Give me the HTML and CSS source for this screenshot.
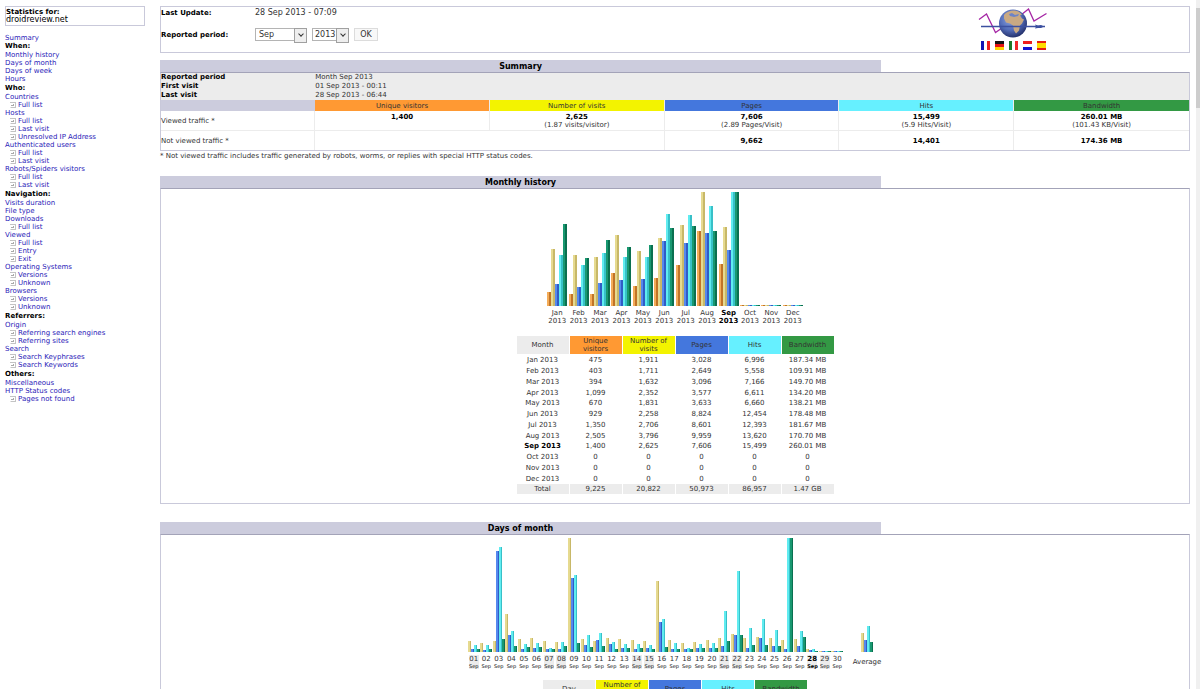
FILE: index.html
```
<!DOCTYPE html>
<html lang="en">
  <head>
    <meta charset="UTF-8" />
    <title>Statistics for droidreview.net (2013-09)</title>
    <link rel="stylesheet" href="styles.css">
  </head>
  <body>
    <svg class="defs" aria-hidden="true">
      <symbol id="page" viewBox="0 0 6 6">
        <path d="M0 .5h6M5.5 0v5.5M.5 5.5h5.500" stroke="#c4c4c4" fill="none" />
        <path d="M1 3.500h3M3.500 2v2" stroke="#aaa" fill="none" />
      </symbol>
    </svg>

    <aside class="sidebar">
      <div class="box site">
        <b>Statistics for:</b>
        <span>droidreview.net</span>
      </div>

      <nav>
        <ul>
          <li><a href="#summary">Summary</a></li>
        </ul>
        <h2>When:</h2>
        <ul>
          <li><a href="#month">Monthly history</a></li>
          <li><a href="#days">Days of month</a></li>
          <li><a href="#week">Days of week</a></li>
          <li><a href="#hours">Hours</a></li>
        </ul>
        <h2>Who:</h2>
        <ul>
          <li><a href="#countries">Countries</a></li>
          <li class="sub"><svg><use href="#page" /></svg><a href="#">Full list</a></li>
          <li><a href="#hosts">Hosts</a></li>
          <li class="sub"><svg><use href="#page" /></svg><a href="#">Full list</a></li>
          <li class="sub"><svg><use href="#page" /></svg><a href="#">Last visit</a></li>
          <li class="sub"><svg><use href="#page" /></svg><a href="#">Unresolved IP Address</a></li>
          <li><a href="#logins">Authenticated users</a></li>
          <li class="sub"><svg><use href="#page" /></svg><a href="#">Full list</a></li>
          <li class="sub"><svg><use href="#page" /></svg><a href="#">Last visit</a></li>
          <li><a href="#robots">Robots/Spiders visitors</a></li>
          <li class="sub"><svg><use href="#page" /></svg><a href="#">Full list</a></li>
          <li class="sub"><svg><use href="#page" /></svg><a href="#">Last visit</a></li>
        </ul>
        <h2>Navigation:</h2>
        <ul>
          <li><a href="#sessions">Visits duration</a></li>
          <li><a href="#filetypes">File type</a></li>
          <li><a href="#downloads">Downloads</a></li>
          <li class="sub"><svg><use href="#page" /></svg><a href="#">Full list</a></li>
          <li><a href="#urls">Viewed</a></li>
          <li class="sub"><svg><use href="#page" /></svg><a href="#">Full list</a></li>
          <li class="sub"><svg><use href="#page" /></svg><a href="#">Entry</a></li>
          <li class="sub"><svg><use href="#page" /></svg><a href="#">Exit</a></li>
          <li><a href="#os">Operating Systems</a></li>
          <li class="sub"><svg><use href="#page" /></svg><a href="#">Versions</a></li>
          <li class="sub"><svg><use href="#page" /></svg><a href="#">Unknown</a></li>
          <li><a href="#browsers">Browsers</a></li>
          <li class="sub"><svg><use href="#page" /></svg><a href="#">Versions</a></li>
          <li class="sub"><svg><use href="#page" /></svg><a href="#">Unknown</a></li>
        </ul>
        <h2>Referrers:</h2>
        <ul>
          <li><a href="#origin">Origin</a></li>
          <li class="sub"><svg><use href="#page" /></svg><a href="#">Referring search engines</a></li>
          <li class="sub"><svg><use href="#page" /></svg><a href="#">Referring sites</a></li>
          <li><a href="#keys">Search</a></li>
          <li class="sub"><svg><use href="#page" /></svg><a href="#">Search Keyphrases</a></li>
          <li class="sub"><svg><use href="#page" /></svg><a href="#">Search Keywords</a></li>
        </ul>
        <h2>Others:</h2>
        <ul>
          <li><a href="#misc">Miscellaneous</a></li>
          <li><a href="#errors">HTTP Status codes</a></li>
          <li class="sub"><svg><use href="#page" /></svg><a href="#">Pages not found</a></li>
        </ul>
      </nav>
    </aside>

    <main>
      <form class="box period">
        <div class="fields">
          <b>Last Update:</b>
          <span>28 Sep 2013 - 07:09</span>
          <label for="monthSelect">Reported period:</label>
          <div class="controls">
            <span class="select">
              <select id="monthSelect">
                <option>Jan</option>
                <option>Feb</option>
                <option>Mar</option>
                <option>Apr</option>
                <option>May</option>
                <option>Jun</option>
                <option>Jul</option>
                <option>Aug</option>
                <option selected>Sep</option>
                <option>Oct</option>
                <option>Nov</option>
                <option>Dec</option>
              </select>
            </span>
            <span class="select year">
              <select aria-label="Year">
                <option>2012</option>
                <option selected>2013</option>
              </select>
            </span>
            <button type="button">OK</button>
          </div>
        </div>

        <div class="brand">
          <svg class="logo" viewBox="0 0 70 30">
            <defs>
              <radialGradient id="sea" cx=".42" cy=".35" r=".65">
                <stop offset="0" stop-color="#8aa4e4" />
                <stop offset=".6" stop-color="#536cb8" />
                <stop offset="1" stop-color="#26336e" />
              </radialGradient>
            </defs>
            <path d="M1 11.500 8.500 6 17.500 24.500 24 20M43 7l7.500-6L56 13l12.500-7.500" fill="none" stroke="#a526a5" stroke-width="1.300" />
            <circle cx="35" cy="15.500" r="14" fill="url(#sea)" />
            <path d="M26 7c2-3 6-4.500 10-4.500 3 0 6 1.500 8 4l-2 1 2 3 2 1-2 4-2 2-1 5-3 3-2-3-1-5-3-2-4-1-2-4z" fill="#c9a983" />
            <path d="M31 6l3-1 3 2 4-1-1 2-4 1-4-1z" fill="#6c83c8" />
            <path d="M3 18.500h64" stroke="#3c50a0" stroke-width="1.300" />
            <path d="M57 16.500l3 1 3-.5 3 1.500-3 1.500h-3l-3 .5 1-2z" fill="#3c50a0" />
          </svg>
          <div class="flags">
            <a class="flag fr" href="#" title="French"></a>
            <a class="flag de" href="#" title="German"></a>
            <a class="flag it" href="#" title="Italian"></a>
            <a class="flag nl" href="#" title="Dutch"></a>
            <a class="flag es" href="#" title="Spanish"></a>
          </div>
        </div>
      </form>

      <section id="summary">
        <h1>Summary</h1>
        <div class="panel">
          <dl class="info">
            <dt>Reported period</dt>
            <dd>Month Sep 2013</dd>
            <dt>First visit</dt>
            <dd>01 Sep 2013 - 00:11</dd>
            <dt>Last visit</dt>
            <dd>28 Sep 2013 - 06:44</dd>
          </dl>
          <table class="traffic">
            <thead>
              <tr>
                <td></td>
                <th class="u">Unique visitors</th>
                <th class="v">Number of visits</th>
                <th class="p">Pages</th>
                <th class="h">Hits</th>
                <th class="k">Bandwidth</th>
              </tr>
            </thead>
            <tbody>
              <tr>
                <th>Viewed traffic *</th>
                <td><b>1,400</b><br>&nbsp;</td>
                <td><b>2,625</b><br>(1.87 visits/visitor)</td>
                <td><b>7,606</b><br>(2.89 Pages/Visit)</td>
                <td><b>15,499</b><br>(5.9 Hits/Visit)</td>
                <td><b>260.01 MB</b><br>(101.43 KB/Visit)</td>
              </tr>
              <tr>
                <th>Not viewed traffic *</th>
                <td colspan="2"></td>
                <td><b>9,662</b></td>
                <td><b>14,401</b></td>
                <td><b>174.36 MB</b></td>
              </tr>
            </tbody>
          </table>
        </div>
        <p class="note">* Not viewed traffic includes traffic generated by robots, worms, or replies with special HTTP status codes.</p>
      </section>

      <section id="month">
        <h1>Monthly history</h1>
        <div class="panel">
          <div class="chart months" id="monthChart"></div>
          <table class="data">
            <thead>
              <tr>
                <th>Month</th>
                <th class="u">Unique visitors</th>
                <th class="v">Number of visits</th>
                <th class="p">Pages</th>
                <th class="h">Hits</th>
                <th class="k">Bandwidth</th>
              </tr>
            </thead>
            <tbody id="monthRows"></tbody>
            <tfoot>
              <tr><td>Total</td><td>9,225</td><td>20,822</td><td>50,973</td><td>86,957</td><td>1.47 GB</td></tr>
            </tfoot>
          </table>
        </div>
      </section>

      <section id="days">
        <h1>Days of month</h1>
        <div class="panel">
          <div class="day-charts">
            <div class="chart days" id="dayChart"></div>
            <div class="chart average" id="averageChart"></div>
          </div>
          <table class="data">
            <thead>
              <tr>
                <th>Day</th>
                <th class="v">Number of visits</th>
                <th class="p">Pages</th>
                <th class="h">Hits</th>
                <th class="k">Bandwidth</th>
              </tr>
            </thead>
          </table>
        </div>
      </section>
    </main>

    <div class="scrollbar"></div>

    <script src="charts.js"></script>
  </body>
</html>
```
FILE: styles.css
```
:root {
  --title-bg: #ccccdd;
  --line: #c9c9da;
  --title-line: #a3a3b8;
  --grey: #ececec;
  --link: #2a22b8;
  --text: #333333;
  --u: #ff9933;
  --v: #f3f300;
  --p: #4477dd;
  --h: #66f0ff;
  --k: #339944;
}

* {
  box-sizing: border-box;
}

html {
  overflow: hidden;
}

body {
  display: flex;
  gap: 15px;
  margin: 0;
  padding: 6px 10px 0 5px;
  background: #ffffff;
  color: var(--text);
  font: 7px/8px "DejaVu Sans", Verdana, sans-serif;
}

h1,
h2,
ul,
dl,
dd,
p {
  margin: 0;
  padding: 0;
}

ul {
  list-style: none;
}

a {
  color: var(--link);
  text-decoration: none;
}

a:hover {
  text-decoration: underline;
}

b,
h1,
h2,
dt,
label {
  color: #000000;
  font-weight: bold;
}

.defs {
  position: absolute;
  width: 0;
  height: 0;
}

.box {
  border: 1px solid var(--line);
}

/* sidebar */
.sidebar {
  flex: 0 0 140px;
}

.site {
  display: flex;
  flex-direction: column;
  margin-bottom: 8px;
  padding: 1px 0;
}

.site span {
  color: #000000;
  font-size: 8px;
}

.sidebar h2 {
  font-size: 7px;
  line-height: 9px;
}

.sidebar h2 + ul {
  margin-bottom: 1px;
}

.sub {
  display: flex;
  align-items: center;
  gap: 2px;
  padding-left: 5px;
}

.sub svg {
  width: 6px;
  height: 6px;
}

/* header */
main {
  flex: 1;
  min-width: 0;
}

.period {
  display: grid;
  grid-template-columns: 79% 1fr;
  padding: 1px 0;
}

.fields {
  display: grid;
  grid-template-columns: 94px 1fr;
  align-content: start;
  row-gap: 11px;
  align-items: center;
  padding-top: 1px;
}

.fields > span {
  font-size: 8px;
}

.controls {
  display: flex;
  gap: 5px;
}

.select {
  position: relative;
  width: 52px;
}

.select.year {
  width: 37px;
}

select,
button {
  height: 13px;
  margin: 0;
  border: 1px solid #b4b4b4;
  background: #ffffff;
  color: var(--text);
  font: 8px/11px "DejaVu Sans", Verdana, sans-serif;
}

select {
  appearance: none;
  display: block;
  width: 100%;
  padding: 0 3px;
  border-radius: 0;
}

.year select {
  padding: 0 2px;
}

.select::before {
  content: "";
  position: absolute;
  top: 0;
  right: 0;
  width: 11px;
  height: 13px;
  border: 1px solid #a0a0a0;
  background: #eeeeee;
  pointer-events: none;
}

.select::after {
  content: "";
  position: absolute;
  top: 4px;
  right: 4px;
  width: 3px;
  height: 3px;
  border: solid #333333;
  border-width: 0 1px 1px 0;
  transform: rotate(45deg);
  pointer-events: none;
}

button {
  width: 24px;
  padding: 0;
  border-color: #dcdcdc;
  background: #f8f8f8;
}

.brand {
  display: flex;
  flex-direction: column;
  gap: 3px;
  padding: 0 0 1px 5px;
}

.logo {
  width: 70px;
  height: 30px;
}

.flags {
  display: flex;
  gap: 5px;
  padding-left: 3px;
}

.flag {
  width: 9px;
  height: 9px;
}

.fr {
  background: linear-gradient(90deg, #1414b4 33%, #ffffff 33% 66%, #f01e1e 66%);
}

.de {
  background: linear-gradient(#141414 33%, #e61414 33% 66%, #ffd200 66%);
}

.it {
  background: linear-gradient(90deg, #1e7828 33%, #ffffff 33% 66%, #f02828 66%);
}

.nl {
  background: linear-gradient(#f01e1e 33%, #ffffff 33% 66%, #1414d2 66%);
}

.es {
  background: linear-gradient(#e61e14 25%, #ffdc00 25% 75%, #e61e14 75%);
}

/* sections */
#summary {
  margin-top: 7px;
}

#month {
  margin-top: 16px;
}

#days {
  margin-top: 18px;
}

section h1 {
  width: 70%;
  padding-top: 1px;
  background: var(--title-bg);
  font-size: 8px;
  line-height: 11px;
  text-align: center;
}

.panel {
  border: 1px solid var(--line);
  border-top-color: var(--title-line);
}

.note {
  padding-top: 1px;
}

.info {
  display: grid;
  grid-template-columns: 15% 1fr;
  background: var(--grey);
  line-height: 9px;
}

table {
  border-collapse: separate;
  border-spacing: 0;
}

th {
  font-weight: normal;
}

td,
th {
  padding: 0;
  text-align: center;
}

.u {
  background: var(--u);
}

.v {
  background: var(--v);
}

.p {
  background: var(--p);
}

.h {
  background: var(--h);
}

.k {
  background: var(--k);
}

.traffic {
  width: 100%;
  table-layout: fixed;
}

.traffic thead td {
  width: 15%;
  background: var(--title-bg);
}

.traffic thead th {
  height: 11px;
  border-right: 1px solid #ececec;
}

.traffic tbody th,
.traffic tbody td {
  height: 20px;
  border-right: 1px solid #ececec;
  border-bottom: 1px solid #ececec;
}

.traffic tbody th {
  text-align: left;
}

.traffic tr > :last-child {
  border-right: 0;
}

.traffic tbody tr:last-child > * {
  height: 19px;
  border-bottom: 0;
}

/* charts */
.chart {
  display: grid;
  grid-auto-flow: column;
  grid-auto-columns: 1fr;
  margin: 0 auto;
  text-align: center;
}

.months {
  width: 257px;
  padding-top: 3px;
}

.bars {
  display: flex;
  align-items: flex-end;
  justify-content: center;
  height: 114px;
  margin-bottom: 3px;
}

.bar {
  width: 4px;
}

.days .bar,
.average .bar {
  width: 3px;
}

.bar-u {
  background: linear-gradient(90deg, #f4ac58 60%, #c07428 60%);
}

.bar-v {
  background: linear-gradient(90deg, #e6da90 60%, #c8b868 60%);
}

.bar-p {
  background: linear-gradient(90deg, #5588ee 60%, #305cc4 60%);
}

.bar-h {
  background: linear-gradient(90deg, #60ecf0 60%, #38c0c8 60%);
}

.bar-k {
  background: linear-gradient(90deg, #189870 60%, #0a7050 60%);
}

.label span {
  display: block;
}

.current {
  color: #000000;
  font-weight: bold;
}

.day-charts {
  display: flex;
  justify-content: center;
  gap: 8px;
  padding-top: 3px;
}

.day-charts .chart {
  margin: 0;
}

.days {
  width: 376px;
}

.days .label {
  width: 10px;
  margin: 0 auto;
}

.days .label span:last-child {
  color: #000000;
  font-size: 5px;
  line-height: 6px;
}

.weekend {
  background: var(--grey);
}

.average {
  width: 31px;
}

.average .label {
  padding-top: 3px;
}

/* data tables */
.data {
  margin: 10px auto 8px;
  table-layout: fixed;
  border-spacing: 1px;
}

.data th {
  width: 52px;
  height: 18px;
  padding: 0 4px;
  background-color: var(--grey);
}

.data th.u {
  background-color: var(--u);
}

.data th.v {
  background-color: var(--v);
}

.data th.p {
  background-color: var(--p);
}

.data th.h {
  background-color: var(--h);
}

.data th.k {
  background-color: var(--k);
}

.data td {
  height: 10px;
}

.data tbody tr:nth-child(4n) td {
  height: 9px;
}

.data tfoot td {
  background: var(--grey);
}

.scrollbar {
  position: fixed;
  top: 0;
  right: 0;
  bottom: 0;
  width: 4px;
  background: linear-gradient(#f0f0f0 8px, #cdcdcd 8px 108px, #f0f0f0 108px);
}
```
FILE: charts.js
```
const CHART_HEIGHT = 114;

// unique visitors, visits, pages, hits, bandwidth in MB
const months = [
  ['Jan', 475, 1911, 3028, 6996, 187.34],
  ['Feb', 403, 1711, 2649, 5558, 109.91],
  ['Mar', 394, 1632, 3096, 7166, 149.7],
  ['Apr', 1099, 2352, 3577, 6611, 134.2],
  ['May', 670, 1831, 3633, 6660, 138.21],
  ['Jun', 929, 2258, 8824, 12454, 178.48],
  ['Jul', 1350, 2706, 8601, 12393, 181.67],
  ['Aug', 2505, 3796, 9959, 13620, 170.7],
  ['Sep', 1400, 2625, 7606, 15499, 260.01],
  ['Oct', 0, 0, 0, 0, 0],
  ['Nov', 0, 0, 0, 0, 0],
  ['Dec', 0, 0, 0, 0, 0],
];

// visits, pages, hits, bandwidth as a share of the highest day, in 1/341
const days = [
  [33, 10, 21, 10],
  [26, 6, 20, 10],
  [33, 303, 314, 38],
  [115, 50, 64, 17],
  [39, 10, 23, 15],
  [41, 12, 27, 14],
  [33, 8, 12, 10],
  [31, 8, 31, 19],
  [341, 220, 230, 26],
  [39, 22, 52, 15],
  [33, 36, 58, 18],
  [41, 23, 31, 10],
  [39, 13, 23, 13],
  [35, 10, 23, 13],
  [34, 12, 22, 10],
  [211, 90, 98, 14],
  [35, 10, 28, 10],
  [28, 10, 13, 10],
  [30, 12, 23, 12],
  [35, 12, 27, 12],
  [43, 18, 124, 32],
  [53, 52, 241, 50],
  [43, 12, 71, 20],
  [46, 41, 100, 22],
  [41, 18, 66, 17],
  [35, 10, 341, 341],
  [39, 19, 64, 45],
  [10, 5, 8, 4],
  [0, 0, 0, 0],
  [0, 0, 0, 0],
];
const average = [57, 37, 77, 30];
const MAX_DAY = 341;

function column(kinds, shares, label) {
  const bars = kinds.map((kind, i) => {
    const height = Math.max(1, Math.round(shares[i] * CHART_HEIGHT));
    return `<div class="bar bar-${kind}" style="height: ${height}px"></div>`;
  });
  return `<div><div class="bars">${bars.join('')}</div>${label}</div>`;
}

const maxVisits = Math.max(...months.map(m => m[2]));
const maxHits = Math.max(...months.map(m => m[4]));
const maxBandwidth = Math.max(...months.map(m => m[5]));

document.getElementById('monthChart').innerHTML = months
  .map(([name, u, v, p, h, k]) => {
    const current = name === 'Sep' ? ' current' : '';
    return column(
      ['u', 'v', 'p', 'h', 'k'],
      [u / maxVisits, v / maxVisits, p / maxHits, h / maxHits, k / maxBandwidth],
      `<div class="label${current}"><span>${name}</span><span>2013</span></div>`,
    );
  })
  .join('');

document.getElementById('monthRows').innerHTML = months
  .map(([name, u, v, p, h, k]) => {
    const current = name === 'Sep' ? ' class="current"' : '';
    const counts = [u, v, p, h].map(n => `<td>${n.toLocaleString('en-US')}</td>`);
    const bandwidth = k ? `${k.toFixed(2)} MB` : '0';
    return `<tr><td${current}>${name} 2013</td>${counts.join('')}<td>${bandwidth}</td></tr>`;
  })
  .join('');

document.getElementById('dayChart').innerHTML = days
  .map((values, i) => {
    const day = i + 1;
    const weekend = day % 7 < 2 ? ' weekend' : '';
    const current = day === 28 ? ' current' : '';
    return column(
      ['v', 'p', 'h', 'k'],
      values.map(n => n / MAX_DAY),
      `<div class="label${weekend}${current}"><span>${String(day).padStart(2, '0')}</span><span>Sep</span></div>`,
    );
  })
  .join('');

document.getElementById('averageChart').innerHTML = column(
  ['v', 'p', 'h', 'k'],
  average.map(n => n / MAX_DAY),
  '<div class="label">Average</div>',
);
```
